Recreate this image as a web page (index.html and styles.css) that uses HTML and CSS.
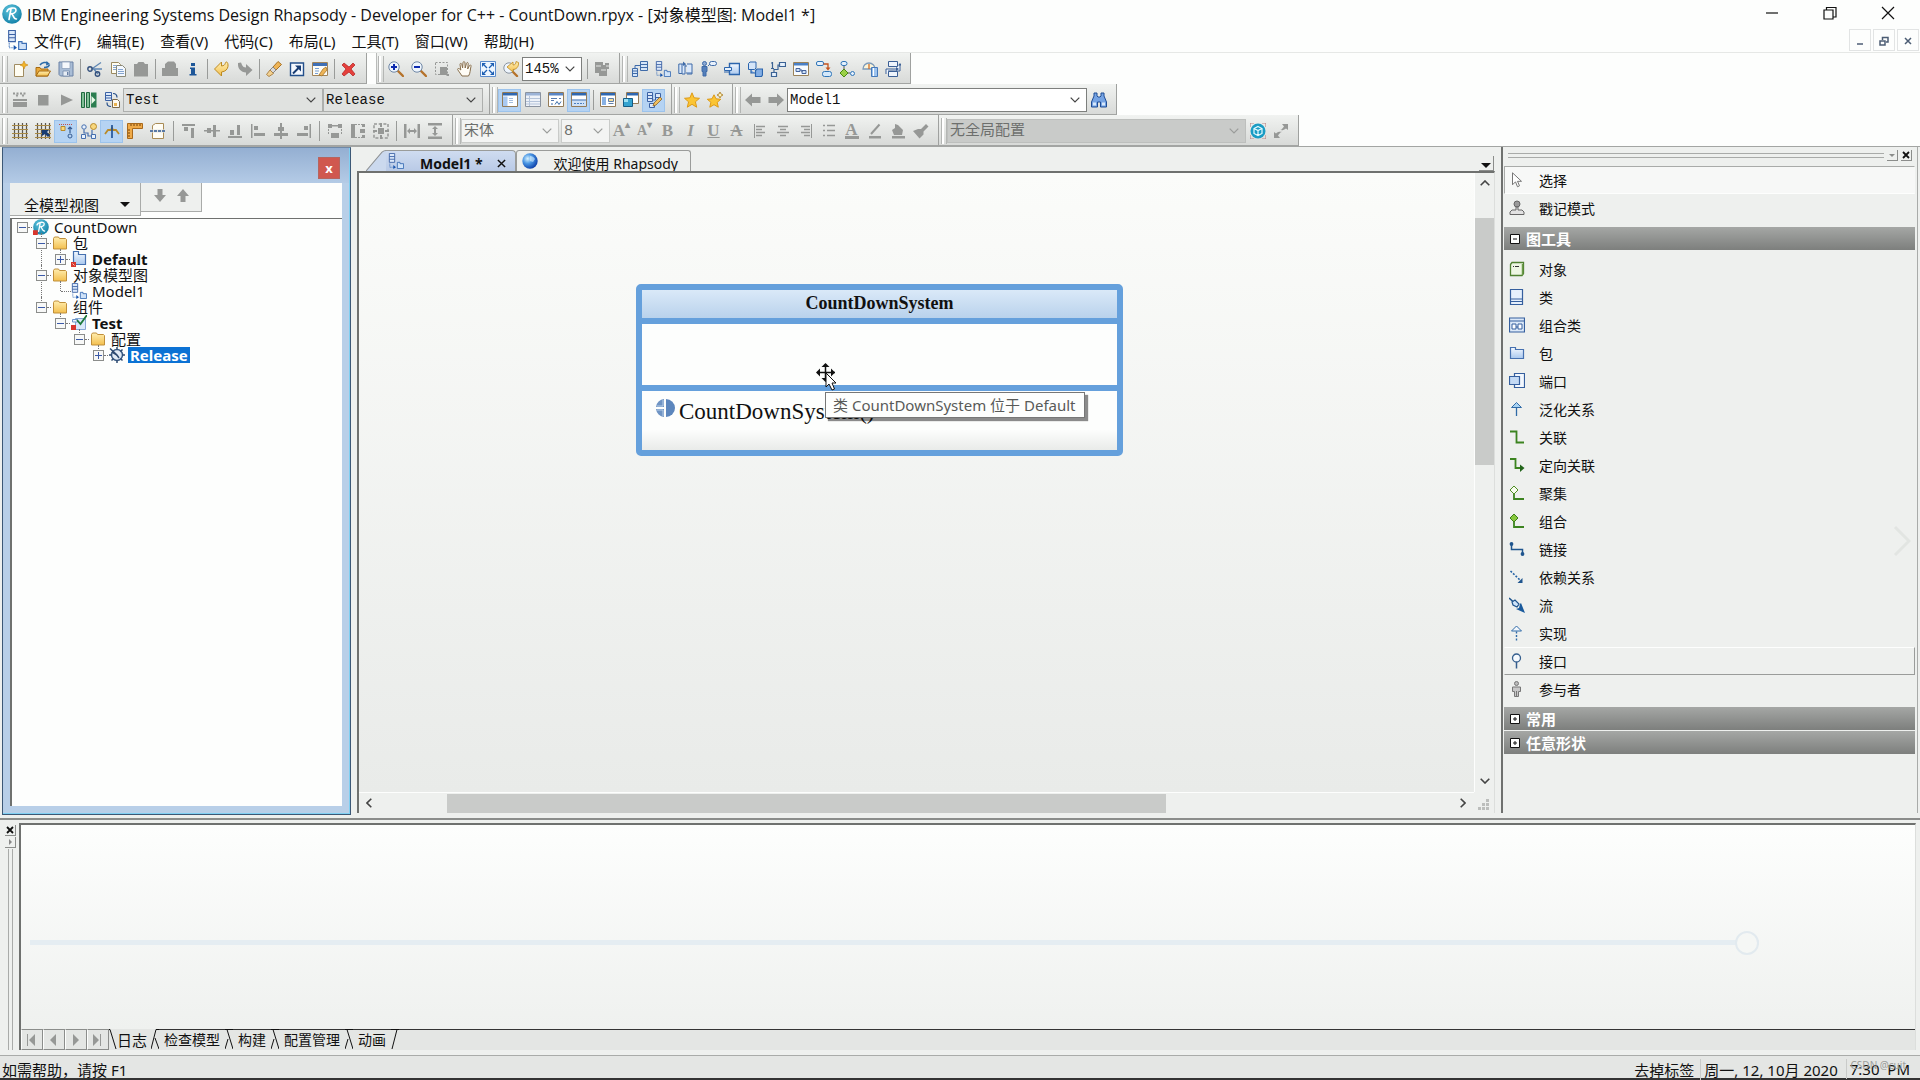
FILE: index.html
```html
<!DOCTYPE html>
<html lang="zh-CN">
<head>
  <meta charset="UTF-8">
  <meta name="viewport" content="width=device-width, initial-scale=1.0">
  <title>IBM Engineering Systems Design Rhapsody</title>
  <link rel="stylesheet" href="styles.css">
</head>
<body>

  <!-- icon sprite -->
  <svg class="sprite" aria-hidden="true">
    <defs>
      <linearGradient id="gBlue" x1="0" y1="0" x2="0" y2="1"><stop offset="0" stop-color="#f4f9ff"/><stop offset="1" stop-color="#a9c8ee"/></linearGradient>
      <linearGradient id="gGold" x1="0" y1="0" x2="0" y2="1"><stop offset="0" stop-color="#ffeeb0"/><stop offset="1" stop-color="#f3bf4e"/></linearGradient>
      <radialGradient id="gLogo" cx=".4" cy=".3" r=".8"><stop offset="0" stop-color="#5ec4dc"/><stop offset="1" stop-color="#0b7ba3"/></radialGradient>
      <radialGradient id="gGlobe" cx=".35" cy=".35" r=".7"><stop offset="0" stop-color="#d8f3ff"/><stop offset=".45" stop-color="#4a97e4"/><stop offset="1" stop-color="#0c3fa8"/></radialGradient>
    </defs>
    <symbol id="logo" viewBox="0 0 20 20"><circle cx="10" cy="10" r="9.8" fill="url(#gLogo)"/><path d="M7 15.5 9 5M5 7.5C6 4 14 2.500 14 6.200 14 9 10.500 10 8.500 9.800M9.800 10c1.400.4 1.600 5.500 4.700 5" fill="none" stroke="#fff" stroke-width="1.600" stroke-linecap="round"/></symbol>
    <symbol id="omd" viewBox="0 0 18 18"><path d="M1.500.5h6v10h-6zM1.500 4h6M1.500 7h6" fill="#dce9fa" stroke="#3c62a5"/><path d="M2 12v4h5" fill="none" stroke="#2b64b5" stroke-dasharray="1 1"/><path d="m6 13.500 3 2.500-3 2z" fill="#1955ad"/><path d="M10.500 17.500v-7h3v1.500h4v5.500z" fill="#cfe2f8" stroke="#3c6fb5"/></symbol>
    <symbol id="new" viewBox="0 0 16 16"><path d="M2.500 3.500h8l1 1v11h-9z" fill="#fffdf2" stroke="#a08c62"/><path d="m12 0 1.200 2.800L16 4l-2.800 1.200L12 8l-1.200-2.800L8 4l2.800-1.200z" fill="#f2b52c" stroke="#c88712" stroke-width=".6"/></symbol>
    <symbol id="open" viewBox="0 0 16 16"><path d="M1 15V6.500h4L6 8h7v7z" fill="#e9a93a" stroke="#a56a12"/><path d="m1 15 3-5h11.500l-3 5z" fill="url(#gGold)" stroke="#a56a12"/><path d="M5 4C7 1 11 1 12.500 2M9 6.500c3 0 5-1 5.500-3" fill="none" stroke="#2b6aa9" stroke-width="1.500"/><path d="M11.500 0 15 3l-4 1.500z" fill="#2b6aa9"/></symbol>
    <symbol id="save" viewBox="0 0 16 16"><path d="M1 1h14v14H2.500L1 13.500z" fill="#a9bdd6" stroke="#6a81a5"/><path d="M4 1h8v6.500H4z" fill="#f5f8fc" stroke="#8599b6" stroke-width=".7"/><path d="M5 10h6.500v5H5z" fill="#e7edf5" stroke="#6a81a5" stroke-width=".7"/><path d="M9 11h1.500v3H9z" fill="#6a81a5"/></symbol>
    <symbol id="cut" viewBox="0 0 16 16"><path d="m4 8.500 10-7M5.500 6.500 11 13M6 8h9" fill="none" stroke="#5f87b4" stroke-width="1.300"/><circle cx="3" cy="8" r="2.200" fill="none" stroke="#35517d" stroke-width="1.400"/><circle cx="10.500" cy="13" r="2.200" fill="none" stroke="#35517d" stroke-width="1.400"/></symbol>
    <symbol id="copy" viewBox="0 0 16 16"><path d="M1.500 1.500h7l2 2v9h-9z" fill="#fffdf2" stroke="#9b8a60"/><path d="M6.500 4.500h6l3 3v8h-9z" fill="#f3f8ff" stroke="#8b8a78"/><path d="M3 4.500h4M3 6.500h3M3 8.500h3M8 8.500h5M8 10.500h6M8 12.500h6" stroke="#86a5cf"/></symbol>
    <symbol id="paste" viewBox="0 0 16 16"><path d="M1 3h3l1.500-2h5L12 3h3v12.500H1z" fill="currentColor"/></symbol>
    <symbol id="print" viewBox="0 0 16 16"><path d="M3 7V3l3-2.500h6L14 3v4h2v8H0V7z" fill="currentColor"/></symbol>
    <symbol id="info" viewBox="0 0 16 16"><path d="M6 2h4v3H6zM5 6.500h5V13h1.500v1.500h-7V13H6V8H5z" fill="#1e5799"/></symbol>
    <symbol id="undo" viewBox="0 0 16 16"><path d="m.5 8 7-7v4c5-.5 3-4 5-4s3.500 9-5 10v4z" fill="url(#gGold)" stroke="#bd8a20" stroke-linejoin="round"/></symbol>
    <symbol id="redo" viewBox="0 0 16 16"><path d="m15.500 9-6.500-6v3.500C5 6.500 5 3 4 1.500L1 2c-.5 6 3 9 8 9.500V15z" fill="currentColor"/></symbol>
    <symbol id="brush" viewBox="0 0 16 16"><path d="m7 6 5-5.500 3.500 3L10 9z" fill="#eeb457" stroke="#a87327"/><path d="m7 6 3 3-3 3-3-3z" fill="#d9d9d9" stroke="#888"/><path d="m4 9 3.500 3.500L3 15.500l-2.500-2z" fill="#f2d191" stroke="#ad8448"/></symbol>
    <symbol id="goto" viewBox="0 0 16 16"><path d="M1.500 2h13v12.500h-13z" fill="#f4f8fe" stroke="#234f8b" stroke-width="1.400"/><path d="m4 12.500 5.500-5.500" stroke="#183c72" stroke-width="2"/><path d="M6 4.500h6v6z" fill="#183c72"/></symbol>
    <symbol id="winbrush" viewBox="0 0 16 16"><path d="M.5 1.500h15v13H.5z" fill="#fdfcf6" stroke="#a1845a"/><path d="M1 2h14v3H1z" fill="#3f6fb5"/><path d="M3 7.500h4M3 10h4M3 12.500h3" stroke="#77a0d6"/><path d="m7 14 4-6 3-2 1 3-5 6z" fill="#eeb457" stroke="#9a6a20" stroke-width=".7"/></symbol>
    <symbol id="delete" viewBox="0 0 16 16"><path d="m3 2 5 4 4-4 2 2-4 4 4 5-2 2-4-4-5 4-2-2 4-5-4-4z" fill="#e5403c" stroke="#b01d1d" stroke-width=".7"/></symbol>
    <symbol id="zoomin" viewBox="0 0 16 16"><path d="m10 10 5 5" stroke="#b5722a" stroke-width="2.400" stroke-linecap="round"/><circle cx="6" cy="6" r="5.200" fill="#eef5fd" stroke="#6f87a5"/><path d="M3 6h6M6 3v6" stroke="#0c2bb0" stroke-width="2"/></symbol>
    <symbol id="zoomout" viewBox="0 0 16 16"><path d="m10 10 5 5" stroke="#b5722a" stroke-width="2.400" stroke-linecap="round"/><circle cx="6" cy="6" r="5.200" fill="#eef5fd" stroke="#6f87a5"/><path d="M3 6h6" stroke="#0c2bb0" stroke-width="2"/></symbol>
    <symbol id="zoomsel" viewBox="0 0 16 16"><path d="M1.500 1.500h12v12h-12z" fill="none" stroke="currentColor" stroke-dasharray="2 1.500"/><path d="M6 6h7v7h2v2h-2l-1-1H6z" fill="currentColor"/></symbol>
    <symbol id="hand" viewBox="0 0 16 16"><path d="M5 15c-1-2-3-4-4.300-6.300C.3 7.200 2 7 3.800 9L3 3.500C3 2 4.500 2 4.800 3.500L5.600 7 6 1.700c.2-1.500 1.700-1.500 1.900 0L8.200 7l1.300-4.700c.5-1.300 1.900-.9 1.700.4L10.700 8l1.800-3.500c.8-1 1.900-.3 1.500.9C13 9 13.500 12 11.500 15z" fill="#fffdf6" stroke="#876e4c"/></symbol>
    <symbol id="fit" viewBox="0 0 16 16"><path d="M.5.5h15v15H.5z" fill="#eef6ff" stroke="#5d8ccb"/><path d="M2 2h4L2 6zM14 2v4l-4-4zM2 14v-4l4 4zM14 14h-4l4-4z" fill="#1d5fb4"/><path d="m4 4 3 3M12 4 9 7M4 12l3-3M12 12 9 9" stroke="#1d5fb4" stroke-width="1.300"/></symbol>
    <symbol id="zoomback" viewBox="0 0 16 16"><path d="m10 11 4 4" stroke="#b5722a" stroke-width="2.400" stroke-linecap="round"/><circle cx="6" cy="7" r="5.200" fill="#eef5fd" stroke="#8a94a0"/><path d="m4 6 6-5v3c2 0 3-1 3-3.500l2.500 1C16 6 13 8.500 10 8.500V11z" fill="url(#gGold)" stroke="#c08a1e" stroke-width=".8"/></symbol>
    <symbol id="layers" viewBox="0 0 16 16"><path d="M1 1h8v3h2V2h4v6h-2v7H5v-3H1z" fill="currentColor"/><path d="M2 5h5M7 9h5M12 5h3" stroke="#e4e6e4"/></symbol>
    <symbol id="d-struct" viewBox="0 0 16 16"><path d="M8.500.5h7v9h-7zM8.500 3.500h7M8.500 6.500h7M.5 7.500h5v8h-5zM.5 10h5M.5 12.500h5M3 7V4.500h5" fill="#d5e5f8" stroke="#3f6ba8"/></symbol>
    <symbol id="d-seq" viewBox="0 0 16 16"><path d="M4 3v10h3V3zM9 3h5v10H9M4 3H.8v9.500H4M7 5h2M8 12h6" fill="#dbe9fb" stroke="#3f6ba8"/><path d="m5 .5 3 2.500-3 2z" fill="#3f6ba8"/></symbol>
    <symbol id="d-use" viewBox="0 0 16 16"><circle cx="3.500" cy="2.500" r="2" fill="#8ba9d3" stroke="#3f6ba8"/><path d="M1 5.500h5v5H5V15H2v-4.500H1zM7 5l2-2" fill="#5580bb" stroke="#3f6ba8"/><rect x="8.500" y=".5" width="7" height="4" rx="2" fill="#e8f1fc" stroke="#3f6ba8"/></symbol>
    <symbol id="d-comp" viewBox="0 0 16 16"><path d="M5.500 2.500h10v11h-10z" fill="url(#gBlue)" stroke="#2c65ad" stroke-width="1.400"/><path d="M.5 6.500h7v3h-7z" fill="#e6f1fc" stroke="#2c65ad"/><path d="M0 11h5" stroke="#2c65ad"/></symbol>
    <symbol id="d-deploy" viewBox="0 0 16 16"><path d="M1.500 2.500 3 1h6v6L7.500 8.500h-6z" fill="#d5e5f8" stroke="#2c65ad"/><path d="m8.500 9.500 1.500-1.500h5.500v6l-1 1.500h-6zM4 9v3h4" fill="#83aee4" stroke="#2c65ad" stroke-width="1.200"/></symbol>
    <symbol id="d-collab" viewBox="0 0 16 16"><path d="M2.500 1v6M1 2h1.500M1 7.500h3M9.500 1.500h6v4h-6zM1.500 11.500h5v4h-5zM4 11V8.500h4V4h1" fill="#e6f1fc" stroke="#3b6294" stroke-width="1.200"/></symbol>
    <symbol id="d-panel" viewBox="0 0 16 16"><path d="M.5 1.500h15v13H.5z" fill="#f7fbff" stroke="#9b8259"/><path d="M1 2h14v2.500H1z" fill="#4a80c6"/><path d="M3 7.500h4v3H3zM9 9.500h4v3H9zM7 9h2v2" fill="#cfe2f8" stroke="#47639a"/></symbol>
    <symbol id="d-state" viewBox="0 0 16 16"><rect x=".5" y=".5" width="7" height="4" rx="1.500" fill="#e5f1fd" stroke="#2f75b8"/><rect x="6.500" y="10.500" width="9" height="5" rx="2" fill="#d3e8fb" stroke="#2f75b8"/><path d="M7.500 3H12v4" fill="none" stroke="#c4521e" stroke-width="1.300"/><path d="M9.500 6.500h5L12 9.500z" fill="#c4521e"/></symbol>
    <symbol id="d-act" viewBox="0 0 16 16"><rect x="2" y=".5" width="6" height="4" rx="2" fill="#e5f1fd" stroke="#2f75b8"/><path d="M5 5v3M8 12h3" stroke="#555"/><path d="m5 8 4 4-4 4-4-4z" fill="#9bd048" stroke="#4b8a12"/><circle cx="13.500" cy="12.500" r="2" fill="#e5f1fd" stroke="#2f75b8"/></symbol>
    <symbol id="d-time" viewBox="0 0 16 16"><path d="M1 8a6 6 0 0 1 12 0z" fill="#fdf5d8" stroke="#7e9bb9" stroke-width="1.300"/><path d="M7 8V3" stroke="#d26b22" stroke-width="1.300"/><path d="M9.500 6.500h6v9h-6z" fill="#9dc3ee" stroke="#4579ba"/><path d="M11.500 7v8" stroke="#fff"/></symbol>
    <symbol id="d-flow" viewBox="0 0 16 16"><path d="M3.500.5h9v5h-9zM3.500 10.500h9v5h-9zM1 13V8h10M3 10h12V4" fill="#eef4fc" stroke="#3b5f95"/><path d="M13 4.500h4L15 2zM11 6v4l3-2z" fill="#3b5f95"/></symbol>
    <symbol id="make" viewBox="0 0 16 16"><path d="M1 7h14v2H1zM1 10h14v5H1z" fill="currentColor"/><path d="M1 1.500h14" stroke="currentColor" stroke-width="2" stroke-dasharray="2 1.500"/><path d="M3.500 2.500h3L5 5.500zM9.500 2.500h3L11 5.500z" fill="currentColor"/></symbol>
    <symbol id="stop" viewBox="0 0 16 16"><path d="M3 3h10.500v10.500H3z" fill="currentColor"/></symbol>
    <symbol id="play" viewBox="0 0 16 16"><path d="M3 2.500 15 8 3 13.500z" fill="currentColor"/></symbol>
    <symbol id="gmr" viewBox="0 0 16 16"><path d="M.5.5h3v15h-3zM5.500.5h3v15h-3z" fill="#7fbf95" stroke="#216a41"/><path d="M10 .5h5.500v15H10z" fill="#2b7d50"/><path d="m10.500 4 4 4-4 4z" fill="#eafbe9"/></symbol>
    <symbol id="dbdoc" viewBox="0 0 16 16"><path d="M1.500.5h6v8h-6zM1.500 3.500h6M1.500 6h6" fill="#dce9fa" stroke="#3c62a5"/><path d="M8.500 7.500h5l2 2v6h-7z" fill="#fffaf0" stroke="#7d6a4b"/><path d="M10 11h3v3h-3z" fill="#e9b24f"/><path d="M9 1.500c3 0 4 1 4 4M7 14.500c-3 0-4-1-4-4" fill="none" stroke="#234c88" stroke-width="1.200"/></symbol>
    <symbol id="w-side" viewBox="0 0 16 16"><path d="M.5.5h15v14H.5z" fill="#fff" stroke="#937b58"/><path d="M1 1h14v2.500H1z" fill="#2e67b0"/><path d="M1 4.500h4.500V14H1z" fill="#a9c9f1"/><path d="M7 6.500h4M7 8.500h4M7 10.500h4" stroke="#a3bddd"/></symbol>
    <symbol id="w-list" viewBox="0 0 16 16"><path d="M.5.5h15v14H.5z" fill="#eef2f8" stroke="#8a93a0"/><path d="M1 1h14v2.500H1z" fill="#9bb3d7"/><path d="M1 6.500h14M1 9.500h14M1 12h14M4.500 4v10" stroke="#b5c4da"/></symbol>
    <symbol id="w-prop" viewBox="0 0 16 16"><path d="M.5.5h15v14H.5z" fill="#fff" stroke="#937b58"/><path d="M1 1h14v2.500H1z" fill="#5a86c5"/><path d="M3 6.500h6M3 8.500h3M11 6.500h2" stroke="#577bb0"/><path d="m7 12.500 2-3 2 3 2-3M3 12h2" fill="none" stroke="#3a6dab"/></symbol>
    <symbol id="w-out" viewBox="0 0 16 16"><path d="M.5.5h15v14H.5z" fill="#fff" stroke="#937b58"/><path d="M1 1h14v2.500H1z" fill="#2e67b0"/><path d="M1 8.500h14V14H1z" fill="#cfe1f6"/><path d="M1 8h14" stroke="#2e67b0"/><path d="M3 11.500h10" stroke="#4b7fc0" stroke-dasharray="2 1"/></symbol>
    <symbol id="w-table" viewBox="0 0 16 16"><path d="M.5.5h15v14H.5z" fill="#fff" stroke="#937b58"/><path d="M1 1h14v2.500H1z" fill="#2e67b0"/><path d="M2 5h4v8H2z" fill="#88b1e4"/><path d="M8.500 6.500h5v3h-5zM8.500 11.500h5" fill="#f5df9a" stroke="#5f7eab"/></symbol>
    <symbol id="w-sub" viewBox="0 0 16 16"><path d="M3.500.5h12v11h-12z" fill="#fff" stroke="#937b58"/><path d="M4 1h11v2.500H4z" fill="#2e67b0"/><path d="M.5 6.500h9v8h-9z" fill="#34a3d0" stroke="#155c85"/><path d="M1 7h4v3H1z" fill="#9be0f3"/></symbol>
    <symbol id="w-edit" viewBox="0 0 16 16"><path d="M1.500.5h5v9h-5zM1.500 3.500h5M1.500 6.500h5M9.500 1.500h5v4h-5zM3.500 11.500h5v4h-5zM6.500 8h3V5" fill="#dbe8fa" stroke="#3c62a5"/><path d="m7 14 1-3 6-6 2 2-6 6z" fill="#f0bf60" stroke="#8d6526" stroke-width=".8"/></symbol>
    <symbol id="star" viewBox="0 0 16 16"><path d="m8 .8 2.100 5 5.400.5-4.100 3.500 1.300 5.400L8 12.300l-4.700 2.900 1.300-5.400L.5 6.300l5.400-.5z" fill="#fbc534" stroke="#dd9a17"/></symbol>
    <symbol id="staradd" viewBox="0 0 16 16"><path d="m7 2.800 2 4 4.800.5-3.600 3 1.100 4.900L7 12.700l-4.200 2.500 1.100-4.900-3.600-3L5 6.800z" fill="#fbc534" stroke="#dd9a17"/><path d="m13 0 1 2 2 1-2 1-1 2-1-2-2-1 2-1z" fill="#fff4b8" stroke="#a87821" stroke-width=".8"/></symbol>
    <symbol id="back" viewBox="0 0 16 16"><path d="m0 8 7-6.500V5h8.500v6H7v3.500z" fill="currentColor"/></symbol>
    <symbol id="fwd" viewBox="0 0 16 16"><path d="M16 8 9 1.500V5H.5v6H9v3.500z" fill="currentColor"/></symbol>
    <symbol id="binoc" viewBox="0 0 16 16"><path d="M3 1h3v3l1 1h2l1-1V1h3v3l2.500 6v5h-6v-5h-3v5h-6v-5L3 4z" fill="#75a3e3" stroke="#1f4c94"/><path d="M2 10.500h3v3H2zM11 10.500h3v3h-3z" fill="#d7e8fb"/></symbol>
    <symbol id="grid" viewBox="0 0 16 16"><path d="M2.500 0v16M6.500 0v16M10.500 0v16M14.500 0v16" stroke="#5d574c" stroke-width="1.200"/><path d="M0 2.500h16M0 6.500h16M0 10.500h16M0 14.500h16" stroke="#a98a45" stroke-width="1.200"/></symbol>
    <symbol id="gridsnap" viewBox="0 0 16 16"><path d="M2.500 0v16M6.500 0v16M10.500 0v16M14.500 0v16" stroke="#5d574c" stroke-width="1.200"/><path d="M0 2.500h16M0 6.500h16M0 10.500h16M0 14.500h16" stroke="#a98a45" stroke-width="1.200"/><path d="M7 7h7l-2 2 3 3-2 2-3-3-3 2z" fill="#173c73"/></symbol>
    <symbol id="f-name" viewBox="0 0 16 16"><path d="M1 1.500h14" stroke="#c0504d" stroke-dasharray="1 1"/><path d="M3 3.500h4v4H3z" fill="#f8d77c" stroke="#b98a2a"/><path d="M12 4v6m-2-4 2-2 2 2" fill="none" stroke="#345b92" stroke-width="1.200"/><circle cx="12" cy="13" r="2" fill="none" stroke="#345b92"/></symbol>
    <symbol id="f-link" viewBox="0 0 16 16"><circle cx="3" cy="4" r="2.200" fill="#e9f2fd" stroke="#466fae"/><circle cx="12.500" cy="3.500" r="3" fill="#f8d77c" stroke="#b98a2a"/><path d="M3 6.500V10h4v3h4V7" fill="none" stroke="#466fae" stroke-width="1.200"/><path d="M.5 11.500h4v4h-4zM10.500 11.500h4v4h-4z" fill="#e9f2fd" stroke="#466fae"/></symbol>
    <symbol id="f-tree" viewBox="0 0 16 16"><path d="M1 11 4 7h3l1-2 1 2h3l3 4" fill="none" stroke="#b98a2a" stroke-width="1.800"/><path d="M8 2v13" stroke="#174c94" stroke-width="1.600"/></symbol>
    <symbol id="ruler" viewBox="0 0 16 16"><path d="M.5.5h15v5h-10v10h-5z" fill="#efaa48" stroke="#a9691b"/><path d="M4 1v2M7 1v2M10 1v2M13 1v2M1 7h2M1 10h2M1 13h2" stroke="#744309"/></symbol>
    <symbol id="pagebrk" viewBox="0 0 16 16"><path d="M2.500 6.500v-4l3-2h8v6M2.500 9.500v6h11v-6" fill="#fffdf5" stroke="#a98b55"/><path d="M0 8h16" stroke="#2e5790" stroke-width="1.500" stroke-dasharray="3 1"/></symbol>
    <symbol id="a-top" viewBox="0 0 16 16"><path d="M1 1h13v2H1zM3 4h4v4H3zM10 5h3v10h-3z" fill="currentColor"/></symbol>
    <symbol id="a-mid" viewBox="0 0 16 16"><path d="M0 7h16v1.500H0zM3 5h4v5H3zM9 2h3v12H9z" fill="currentColor"/></symbol>
    <symbol id="a-bot" viewBox="0 0 16 16"><path d="M1 13h14v2H1zM3 7h4v5H3zM10 2h3v10h-3z" fill="currentColor"/></symbol>
    <symbol id="a-left" viewBox="0 0 16 16"><path d="M1 1h1.500v14H1zM4 3h4v4H4zM4 10h11v3H4z" fill="currentColor"/></symbol>
    <symbol id="a-cen" viewBox="0 0 16 16"><path d="M7 0h2v16H7zM5 4h6v4H5zM1 10h14v3H1z" fill="currentColor"/></symbol>
    <symbol id="a-right" viewBox="0 0 16 16"><path d="M13.500 1H15v14h-1.500zM8 3h4v4H8zM1 10h11v3H1z" fill="currentColor"/></symbol>
    <symbol id="s-w" viewBox="0 0 16 16"><path d="M1 1h4v4H1zM11 1h4v4h-4zM5 2h6v1.500H5zM4 10h8v5H4z" fill="currentColor"/><path d="M1.500 6v6M14.500 6v6" fill="none" stroke="currentColor" stroke-dasharray="2 1"/></symbol>
    <symbol id="s-h" viewBox="0 0 16 16"><path d="M1 1h4v14H1zM12 1h3v3h-3zM12 12h3v3h-3zM10 6h5v4h-5z" fill="currentColor"/><path d="M5 1.500h7M5 14.500h7" stroke="currentColor" stroke-dasharray="2 1"/></symbol>
    <symbol id="s-both" viewBox="0 0 16 16"><path d="M5 5h6v6H5zM0 7h4v2H0zM12 7h4v2h-4zM7 0h2v4H7zM7 12h2v4H7z" fill="currentColor"/><path d="M1 1h14v14H1z" fill="none" stroke="currentColor" stroke-width="1.500" stroke-dasharray="3 1.700"/></symbol>
    <symbol id="sp-h" viewBox="0 0 16 16"><path d="M0 1h2.500v14H0zM13.500 1H16v14h-2.500zM3 8l3-3v2h4V5l3 3-3 3V9H6v2z" fill="currentColor"/></symbol>
    <symbol id="sp-v" viewBox="0 0 16 16"><path d="M1 0h14v2.500H1zM1 13.500h14V16H1zM8 3l3 3H9v4h2l-3 3-3-3h2V6H5z" fill="currentColor"/></symbol>
    <symbol id="t-left" viewBox="0 0 16 16"><path d="M2.500 1v14" stroke="currentColor"/><path d="M4 3.500h9M4 6.500h6M4 9.500h9M4 12.500h6" stroke="currentColor" stroke-width="1.500"/></symbol>
    <symbol id="t-center" viewBox="0 0 16 16"><path d="M3 3.500h10M5 6.500h6M2 9.500h12M5 12.500h6" stroke="currentColor" stroke-width="1.500"/></symbol>
    <symbol id="t-right" viewBox="0 0 16 16"><path d="M13.500 1v14" stroke="currentColor"/><path d="M3 3.500h9M6 6.500h6M3 9.500h9M6 12.500h6" stroke="currentColor" stroke-width="1.500"/></symbol>
    <symbol id="t-list" viewBox="0 0 16 16"><path d="M2 2.500h2M2 7.500h2M2 12.500h2M6 2.500h8M6 7.500h8M6 12.500h8" stroke="currentColor" stroke-width="1.500"/></symbol>
    <symbol id="t-pen" viewBox="0 0 16 16"><path d="M2 13h12v2.500H2z" fill="currentColor"/><path d="m4 11 8.500-9.500" stroke="currentColor" stroke-width="2"/></symbol>
    <symbol id="t-fill" viewBox="0 0 16 16"><path d="M2 13h13v2.500H2zM5 1l3 1 5 5-1 5H4L2 7l3-2z" fill="currentColor"/></symbol>
    <symbol id="t-brush" viewBox="0 0 16 16"><path d="m0 8 5-2 3 0 5-5 2.500 2.500-5 5 0 3-4 4z" fill="currentColor"/></symbol>
    <symbol id="gconf" viewBox="0 0 16 16"><circle cx="8" cy="8" r="7.500" fill="#1a9cc4"/><path d="M0 0h4M0 0v4M16 0h-4M16 0v4M0 16h4M0 16v-4M16 16h-4M16 16v-4" stroke="#b88" stroke-width="1.200"/><path d="m8 3.500 4 2v5l-4 2-4-2v-5zM4 5.500l4 2 4-2M8 7.500v5" fill="none" stroke="#e6fbff" stroke-width="1.200"/></symbol>
    <symbol id="refresh" viewBox="0 0 16 16"><path d="M15 1v6l-2-1.500C10 8 8 7 7 7c2 0 2.500-2 4-3.500L9 1zM1 15V9l2 1.500C6 8 8 9 9 9c-2 0-2.500 2-4 3.500L7 15z" fill="currentColor"/></symbol>
    <symbol id="folder" viewBox="0 0 16 14"><path d="M1.500 13V2.500l1-1.500h4l1 1.500h6l1 1V13z" fill="url(#gGold)" stroke="#c08f3a"/></symbol>
    <symbol id="pkg" viewBox="0 0 16 16"><path d="M1.500 13.500v-11h5v2h8v9z" fill="url(#gBlue)" stroke="#4671b0" stroke-width="1.200"/></symbol>
    <symbol id="pkgred" viewBox="0 0 16 16"><path d="M2.500 13.500v-13h5v3h7v10z" fill="url(#gBlue)" stroke="#4671b0" stroke-width="1.200"/><path d="M0 11h5v5H0z" fill="#d8372e"/><path d="m1.500 12.500 2 2" stroke="#fff" stroke-width=".7"/></symbol>
    <symbol id="logored" viewBox="0 0 20 20"><use href="#logo" width="20" height="20"/><path d="M0 14h6v6H0z" fill="#d8372e"/></symbol>
    <symbol id="comp" viewBox="0 0 16 16"><path d="M4.500 3.500h10v11h-10z" fill="#d9e8fa" stroke="#86a7d4"/><path d="M1.500 4.500h5v2.500h-5z" fill="#eef5fd" stroke="#6d93c7"/><path d="m6 5 3.500 4L16 0" fill="none" stroke="#1d7a3a" stroke-width="1.800"/><path d="M0 10h5v5H0z" fill="#d8372e"/></symbol>
    <symbol id="gear" viewBox="0 0 16 16"><circle cx="8" cy="8" r="5.500" fill="#e2ebf5" stroke="#3f5f87" stroke-width="1.500"/><path d="M8 0v3M8 13v3M0 8h3M13 8h3M1 1.500 8 8l2 3M2.500 13.500l2-2M11.500 11.500l2 2M11.500 4.500l2-2M3 5l5 3" stroke="#2f4c72" stroke-width="1.500"/></symbol>
    <symbol id="globe" viewBox="0 0 16 16"><circle cx="8" cy="8" r="7.700" fill="url(#gGlobe)"/><path d="M8 3c2 0 4 1 5 3l-2 3-3-1z" fill="#d9f0ff" opacity=".6"/></symbol>
    <symbol id="ctor" viewBox="0 0 20 20"><path d="M9 1v8H1a9 9 0 0 1 8-8zM9 19v-8H1a9 9 0 0 0 8 8z" fill="#6f94c4"/><path d="M11 1a9 9 0 0 1 0 18z" fill="#5c86bd"/><path d="M8 2v6H2M8 18v-6H2" stroke="#b9cfe8" fill="none"/></symbol>
    <symbol id="p-sel" viewBox="0 0 16 16"><path d="M3.500.8v12l3-3 2 5 2-1-2-4.500h4z" fill="#fff" stroke="#777"/></symbol>
    <symbol id="p-stamp" viewBox="0 0 16 16"><circle cx="8" cy="4" r="3" fill="#9a9a9a" stroke="#666"/><path d="M7 7h2v3h4l2 2v2.500H1V12l2-2h4z" fill="#e2e2e2" stroke="#666"/></symbol>
    <symbol id="p-obj" viewBox="0 0 16 16"><path d="m1.500 3.500 1.500-2h11.500v11l-1.500 2H1.500z" fill="#eef7e3" stroke="#4f8130" stroke-width="1.300"/><path d="M13.500 3v11" stroke="#6b9a49" stroke-width="1.500"/><path d="M4 5.500h1M6 5.500h4" stroke="#333"/></symbol>
    <symbol id="p-class" viewBox="0 0 16 16"><path d="M1.500.5h12v15h-12zM1.500 10h12M1.500 12.500h12" fill="#e6f0fc" stroke="#355f9e" stroke-width="1.200"/></symbol>
    <symbol id="p-cclass" viewBox="0 0 16 16"><path d="M.5 1h15v14H.5zM.5 4h15" fill="#dbe8f8" stroke="#355f9e" stroke-width="1.200"/><path d="M3 7h4v5H3zM9 7h4v5H9zM7 10h2" fill="#fff" stroke="#355f9e"/></symbol>
    <symbol id="p-port" viewBox="0 0 16 16"><path d="M5.500.5h10v14h-10z" fill="#f3f8fe" stroke="#355f9e" stroke-width="1.200"/><path d="M.5 3.500h10v8H.5z" fill="#c4daf4" stroke="#355f9e" stroke-width="1.200"/></symbol>
    <symbol id="p-gen" viewBox="0 0 16 16"><path d="M7.500 15V6" stroke="#2f6aa7" stroke-width="1.300"/><path d="m7.500 1.500 5 5h-10z" fill="#a9d3f2" stroke="#2f6aa7"/></symbol>
    <symbol id="p-assoc" viewBox="0 0 16 16"><path d="M1 2.500h6.500v11H15" fill="none" stroke="#3c8420" stroke-width="1.800"/></symbol>
    <symbol id="p-dassoc" viewBox="0 0 16 16"><path d="M1 2h5.500v9H12" fill="none" stroke="#3c8420" stroke-width="1.800"/><path d="m11 7.500 4.500 3.500-4.500 4z" fill="#22651a"/></symbol>
    <symbol id="p-agg" viewBox="0 0 16 16"><path d="M5 8v6h10" fill="none" stroke="#3c8420" stroke-width="1.800"/><path d="m5 1 4 4-4 4-4-4z" fill="#f7fcef" stroke="#4f8f22"/></symbol>
    <symbol id="p-compo" viewBox="0 0 16 16"><path d="M5 8v6h10" fill="none" stroke="#3c8420" stroke-width="1.800"/><path d="m5 1 4 4-4 4-4-4z" fill="#87c73d" stroke="#3c7f18"/></symbol>
    <symbol id="p-link" viewBox="0 0 16 16"><path d="M2.500 3v5.500h11V13" fill="none" stroke="#1f558e" stroke-width="1.500"/><circle cx="2.500" cy="3" r="1.900" fill="#1f558e"/><circle cx="13.500" cy="13" r="1.900" fill="#1f558e"/></symbol>
    <symbol id="p-dep" viewBox="0 0 16 16"><path d="m1.500 2 10 9.500" stroke="#2563a5" stroke-width="1.600" stroke-dasharray="2 1.500"/><path d="M13.500 9v5h-5z" fill="#1f558e"/></symbol>
    <symbol id="p-flow" viewBox="0 0 16 16"><path d="m0 1 9 8" stroke="#1f558e" stroke-width="1.600"/><path d="m3 5 3-2 4 4-2 3-4-2z" fill="#cfe4f9" stroke="#1f558e" stroke-width="1.200"/><path d="m16 16-9-4 3-1 1-4 1-1z" fill="#1a5a9c"/></symbol>
    <symbol id="p-real" viewBox="0 0 16 16"><path d="M7.500 15.500V6" stroke="#2f6aa7" stroke-width="1.400" stroke-dasharray="2 1.500"/><path d="m7.500 1 5 5h-10z" fill="#f3f8fd" stroke="#2f6aa7"/></symbol>
    <symbol id="p-iface" viewBox="0 0 16 16"><circle cx="7.500" cy="5" r="4" fill="#f6fafe" stroke="#355f8e" stroke-width="1.300"/><path d="M7.500 9v6.500" stroke="#355f8e" stroke-width="1.500"/></symbol>
    <symbol id="p-actor" viewBox="0 0 16 16"><circle cx="7.500" cy="2.500" r="2" fill="#bbb" stroke="#777"/><path d="M3.500 6h8v4.500h-2v5h-4v-5h-2z" fill="#c8c8c8" stroke="#777"/><path d="M7.500 10v5" stroke="#777"/></symbol>
    <symbol id="chev" viewBox="0 0 10 6"><path d="m.7.7 4.300 4.300L9.300.7" fill="none" stroke="currentColor" stroke-width="1.200"/></symbol>
  </svg>

  <header class="titlebar">
    <svg class="app-logo"><use href="#logo"/></svg>
    <h1>IBM Engineering Systems Design Rhapsody - Developer for C++ - CountDown.rpyx - [对象模型图: Model1 *]</h1>
    <div class="win-buttons">
      <button aria-label="最小化"><svg viewBox="0 0 14 14"><path d="M1 7h12"/></svg></button>
      <button aria-label="还原"><svg viewBox="0 0 14 14"><path d="M1 4h9v9H1zM3.500 4V1.500H13V11h-3"/></svg></button>
      <button aria-label="关闭"><svg viewBox="0 0 14 14"><path d="m1 1 12 12M13 1 1 13"/></svg></button>
    </div>
  </header>

  <nav class="menubar">
    <svg class="doc-icon"><use href="#omd"/></svg>
    <button>文件(F)</button>
    <button>编辑(E)</button>
    <button>查看(V)</button>
    <button>代码(C)</button>
    <button>布局(L)</button>
    <button>工具(T)</button>
    <button>窗口(W)</button>
    <button>帮助(H)</button>
    <div class="mdi-buttons">
      <button aria-label="最小化文档"><svg viewBox="0 0 10 10"><path d="M2 8h6"/></svg></button>
      <button aria-label="还原文档"><svg viewBox="0 0 10 10"><path d="M1 5h5v4H1zM3.500 4V1.500H9V6H7"/></svg></button>
      <button aria-label="关闭文档"><svg viewBox="0 0 10 10"><path d="m2 2 6 6M8 2 2 8"/></svg></button>
    </div>
  </nav>

  <div class="toolbars">
    <div class="toolbar-row">
      <div class="toolbar">
        <span class="grip"></span>
        <button class="tool" aria-label="新建"><svg><use href="#new"/></svg></button>
        <button class="tool" aria-label="打开"><svg><use href="#open"/></svg></button>
        <button class="tool" aria-label="保存"><svg><use href="#save"/></svg></button>
        <span class="sep"></span>
        <button class="tool" aria-label="剪切"><svg><use href="#cut"/></svg></button>
        <button class="tool" aria-label="复制"><svg><use href="#copy"/></svg></button>
        <button class="tool" aria-label="粘贴"><svg><use href="#paste"/></svg></button>
        <span class="sep"></span>
        <button class="tool" aria-label="打印"><svg><use href="#print"/></svg></button>
        <button class="tool" aria-label="关于"><svg><use href="#info"/></svg></button>
        <span class="sep"></span>
        <button class="tool" aria-label="撤销"><svg><use href="#undo"/></svg></button>
        <button class="tool" aria-label="重做"><svg><use href="#redo"/></svg></button>
        <span class="sep"></span>
        <button class="tool" aria-label="格式刷"><svg><use href="#brush"/></svg></button>
        <button class="tool" aria-label="转到"><svg><use href="#goto"/></svg></button>
        <button class="tool" aria-label="特性"><svg><use href="#winbrush"/></svg></button>
        <span class="sep"></span>
        <button class="tool" aria-label="删除"><svg><use href="#delete"/></svg></button>
      </div>
      <div class="toolbar spaced">
        <span class="grip"></span>
        <button class="tool" aria-label="放大"><svg><use href="#zoomin"/></svg></button>
        <button class="tool" aria-label="缩小"><svg><use href="#zoomout"/></svg></button>
        <button class="tool" aria-label="缩放到选择"><svg><use href="#zoomsel"/></svg></button>
        <button class="tool" aria-label="平移"><svg><use href="#hand"/></svg></button>
        <button class="tool" aria-label="适合窗口"><svg><use href="#fit"/></svg></button>
        <button class="tool" aria-label="撤销缩放"><svg><use href="#zoomback"/></svg></button>
        <label class="combo combo-zoom"><select aria-label="缩放比例"><option>145%</option></select><svg><use href="#chev"/></svg></label>
        <span class="sep"></span>
        <button class="tool" aria-label="图层"><svg><use href="#layers"/></svg></button>
      </div>
      <div class="toolbar">
        <span class="grip"></span>
        <button class="tool" aria-label="结构图"><svg><use href="#d-struct"/></svg></button>
        <button class="tool" aria-label="对象模型图"><svg><use href="#omd"/></svg></button>
        <button class="tool" aria-label="序列图"><svg><use href="#d-seq"/></svg></button>
        <button class="tool" aria-label="用例图"><svg><use href="#d-use"/></svg></button>
        <button class="tool" aria-label="组件图"><svg><use href="#d-comp"/></svg></button>
        <button class="tool" aria-label="部署图"><svg><use href="#d-deploy"/></svg></button>
        <button class="tool" aria-label="协作图"><svg><use href="#d-collab"/></svg></button>
        <button class="tool" aria-label="面板图"><svg><use href="#d-panel"/></svg></button>
        <button class="tool" aria-label="状态图"><svg><use href="#d-state"/></svg></button>
        <button class="tool" aria-label="活动图"><svg><use href="#d-act"/></svg></button>
        <button class="tool" aria-label="时序图"><svg><use href="#d-time"/></svg></button>
        <button class="tool" aria-label="流程图"><svg><use href="#d-flow"/></svg></button>
      </div>
    </div>

    <div class="toolbar-row">
      <div class="toolbar">
        <span class="grip"></span>
        <button class="tool" aria-label="构建"><svg><use href="#make"/></svg></button>
        <button class="tool" aria-label="停止"><svg><use href="#stop"/></svg></button>
        <button class="tool" aria-label="运行"><svg><use href="#play"/></svg></button>
        <button class="tool" aria-label="生成/构建/运行"><svg><use href="#gmr"/></svg></button>
        <button class="tool" aria-label="往返"><svg><use href="#dbdoc"/></svg></button>
        <label class="combo combo-comp flat"><select aria-label="组件"><option>Test</option></select><svg><use href="#chev"/></svg></label>
        <label class="combo combo-conf flat"><select aria-label="配置"><option>Release</option></select><svg><use href="#chev"/></svg></label>
      </div>
      <div class="toolbar">
        <span class="grip"></span>
        <button class="tool on" aria-label="浏览器"><svg><use href="#w-side"/></svg></button>
        <button class="tool" aria-label="列表"><svg><use href="#w-list"/></svg></button>
        <button class="tool" aria-label="属性窗口"><svg><use href="#w-prop"/></svg></button>
        <button class="tool on" aria-label="输出窗口"><svg><use href="#w-out"/></svg></button>
        <span class="sep"></span>
        <button class="tool" aria-label="表"><svg><use href="#w-table"/></svg></button>
        <button class="tool" aria-label="子窗口"><svg><use href="#w-sub"/></svg></button>
        <button class="tool on" aria-label="绘图工具"><svg><use href="#w-edit"/></svg></button>
      </div>
      <div class="toolbar">
        <span class="grip"></span>
        <button class="tool" aria-label="收藏夹"><svg><use href="#star"/></svg></button>
        <button class="tool" aria-label="添加收藏"><svg><use href="#staradd"/></svg></button>
      </div>
      <div class="toolbar">
        <span class="grip"></span>
        <button class="tool" aria-label="后退"><svg><use href="#back"/></svg></button>
        <button class="tool" aria-label="前进"><svg><use href="#fwd"/></svg></button>
        <label class="combo combo-nav"><select aria-label="图"><option>Model1</option></select><svg><use href="#chev"/></svg></label>
        <button class="tool" aria-label="搜索"><svg><use href="#binoc"/></svg></button>
      </div>
    </div>

    <div class="toolbar-row">
      <div class="toolbar layout-bar">
        <span class="grip"></span>
        <button class="tool" aria-label="网格"><svg><use href="#grid"/></svg></button>
        <button class="tool" aria-label="对齐网格"><svg><use href="#gridsnap"/></svg></button>
        <button class="tool on" aria-label="名称"><svg><use href="#f-name"/></svg></button>
        <button class="tool" aria-label="连线"><svg><use href="#f-link"/></svg></button>
        <button class="tool on" aria-label="树形"><svg><use href="#f-tree"/></svg></button>
        <button class="tool" aria-label="标尺"><svg><use href="#ruler"/></svg></button>
        <button class="tool" aria-label="分页符"><svg><use href="#pagebrk"/></svg></button>
        <span class="sep"></span>
        <button class="tool" aria-label="顶端对齐"><svg><use href="#a-top"/></svg></button>
        <button class="tool" aria-label="垂直居中"><svg><use href="#a-mid"/></svg></button>
        <button class="tool" aria-label="底端对齐"><svg><use href="#a-bot"/></svg></button>
        <button class="tool" aria-label="左对齐"><svg><use href="#a-left"/></svg></button>
        <button class="tool" aria-label="水平居中"><svg><use href="#a-cen"/></svg></button>
        <button class="tool" aria-label="右对齐"><svg><use href="#a-right"/></svg></button>
        <span class="sep"></span>
        <button class="tool" aria-label="同宽"><svg><use href="#s-w"/></svg></button>
        <button class="tool" aria-label="同高"><svg><use href="#s-h"/></svg></button>
        <button class="tool" aria-label="同大小"><svg><use href="#s-both"/></svg></button>
        <span class="sep"></span>
        <button class="tool" aria-label="水平间距"><svg><use href="#sp-h"/></svg></button>
        <button class="tool" aria-label="垂直间距"><svg><use href="#sp-v"/></svg></button>
      </div>
      <div class="toolbar">
        <span class="grip"></span>
        <label class="combo combo-font dim"><select aria-label="字体"><option>宋体</option></select><svg><use href="#chev"/></svg></label>
        <label class="combo combo-size dim"><select aria-label="字号"><option>8</option></select><svg><use href="#chev"/></svg></label>
        <button class="tool glyph" aria-label="增大字号">A<sup>▴</sup></button>
        <button class="tool glyph small" aria-label="减小字号">A<sup>▾</sup></button>
        <button class="tool glyph" aria-label="粗体">B</button>
        <button class="tool glyph" aria-label="斜体"><i>I</i></button>
        <button class="tool glyph" aria-label="下划线"><u>U</u></button>
        <button class="tool glyph" aria-label="删除线"><s>A</s></button>
        <button class="tool" aria-label="文本左对齐"><svg><use href="#t-left"/></svg></button>
        <button class="tool" aria-label="文本居中"><svg><use href="#t-center"/></svg></button>
        <button class="tool" aria-label="文本右对齐"><svg><use href="#t-right"/></svg></button>
        <button class="tool" aria-label="项目符号"><svg><use href="#t-list"/></svg></button>
        <button class="tool glyph" aria-label="字体颜色"><span class="font-color">A</span></button>
        <button class="tool" aria-label="线条颜色"><svg><use href="#t-pen"/></svg></button>
        <button class="tool" aria-label="填充颜色"><svg><use href="#t-fill"/></svg></button>
        <button class="tool" aria-label="样式刷"><svg><use href="#t-brush"/></svg></button>
      </div>
      <div class="toolbar">
        <span class="grip"></span>
        <label class="combo combo-global off"><select aria-label="全局配置" disabled><option>无全局配置</option></select><svg><use href="#chev"/></svg></label>
        <button class="tool" aria-label="选择全局配置"><svg><use href="#gconf"/></svg></button>
        <button class="tool" aria-label="刷新"><svg><use href="#refresh"/></svg></button>
      </div>
    </div>
  </div>

  <main class="workspace">
    <aside class="browser">
      <div class="browser-title"><button aria-label="关闭浏览器">x</button></div>
      <div class="browser-inner">
        <div class="view-bar">
          <button class="view-select">全模型视图 <span class="tri"></span></button>
          <div class="view-nav">
            <button aria-label="下移"><svg viewBox="0 0 12 14"><path d="M3.500 0h5v6H12l-6 7-6-7h3.500z"/></svg></button>
            <button aria-label="上移"><svg viewBox="0 0 12 14"><path d="M3.500 13h5V7H12L6 0 0 7h3.500z"/></svg></button>
          </div>
        </div>
        <div class="tree">
          <ul>
            <li>
              <div class="node"><button class="exp" aria-label="折叠"></button><svg><use href="#logored"/></svg><span>CountDown</span></div>
              <ul>
                <li>
                  <div class="node"><button class="exp" aria-label="折叠"></button><svg><use href="#folder"/></svg><span>包</span></div>
                  <ul>
                    <li><div class="node"><button class="exp plus" aria-label="展开"></button><svg><use href="#pkgred"/></svg><b>Default</b></div></li>
                  </ul>
                </li>
                <li>
                  <div class="node"><button class="exp" aria-label="折叠"></button><svg><use href="#folder"/></svg><span>对象模型图</span></div>
                  <ul>
                    <li><div class="node"><i class="leaf"></i><svg><use href="#omd"/></svg><span>Model1</span></div></li>
                  </ul>
                </li>
                <li>
                  <div class="node"><button class="exp" aria-label="折叠"></button><svg><use href="#folder"/></svg><span>组件</span></div>
                  <ul>
                    <li>
                      <div class="node"><button class="exp" aria-label="折叠"></button><svg><use href="#comp"/></svg><b>Test</b></div>
                      <ul>
                        <li>
                          <div class="node"><button class="exp" aria-label="折叠"></button><svg><use href="#folder"/></svg><span>配置</span></div>
                          <ul>
                            <li><div class="node"><button class="exp plus" aria-label="展开"></button><svg><use href="#gear"/></svg><b class="selected">Release</b></div></li>
                          </ul>
                        </li>
                      </ul>
                    </li>
                  </ul>
                </li>
              </ul>
            </li>
          </ul>
        </div>
      </div>
    </aside>

    <section class="editor">
      <div class="doc-tabs">
        <div class="doc-tab active">
          <svg class="tab-edge" viewBox="0 0 20 20" preserveAspectRatio="none"><path d="M0 20 16 2q2-1.500 4-1.500V20z" fill="#cbd9ee"/><path d="M0 20 16 2q2-1.500 4-1.500" fill="none" stroke="#8d9092"/></svg>
          <div class="tab-body"><svg class="tab-icon"><use href="#omd"/></svg><b>Model1 *</b><button aria-label="关闭标签"><svg viewBox="0 0 10 10"><path d="m1 1 8 8M9 1 1 9"/></svg></button></div>
        </div>
        <div class="doc-tab">
          <div class="tab-body"><svg class="tab-icon"><use href="#globe"/></svg><span>欢迎使用 Rhapsody</span></div>
        </div>
        <button class="tab-list" aria-label="标签列表"><span class="tri"></span></button>
      </div>
      <div class="canvas-area">
        <div class="canvas">
          <div class="class-box">
            <div class="class-name">CountDownSystem</div>
            <div class="class-attrs"></div>
            <div class="class-ops"><svg><use href="#ctor"/></svg><span>CountDownSystem()</span></div>
          </div>
          <svg class="cursor" viewBox="0 0 20 28"><path d="M9.500 1v17M1 9.500h18" stroke="#111" stroke-width="1.500"/><path d="m9.500 0 4 4h-8zM9.500 19l4-4h-8zM0 9.500l4-4v8zM19 9.500l-4-4v8z" fill="#111"/><path d="M10 10v14l3-3 3 6 2.500-1-2.500-6h4z" fill="#fff" stroke="#111"/></svg>
          <div class="tooltip">类 CountDownSystem 位于 Default</div>
        </div>
        <div class="vscroll">
          <svg class="arrow" viewBox="0 0 10 6"><path d="m.7 5.300 4.300-4.300 4.300 4.300"/></svg>
          <div class="vtrack"><div class="vthumb"></div></div>
          <svg class="arrow" viewBox="0 0 10 6"><path d="m.7.7 4.300 4.300L9.300.7"/></svg>
        </div>
        <div class="hscroll">
          <svg class="arrow side" viewBox="0 0 6 10"><path d="M5.300.7 1 5l4.300 4.300"/></svg>
          <div class="htrack"><div class="hthumb"></div></div>
          <svg class="arrow side" viewBox="0 0 6 10"><path d="m.7.7 4.300 4.300-4.300 4.300"/></svg>
        </div>
        <div class="corner"><svg viewBox="0 0 12 12"><path d="M8 0h3v3H8zM4 4h3v3H4zM8 4h3v3H8zM0 8h3v3H0zM4 8h3v3H4zM8 8h3v3H8z"/></svg></div>
      </div>
    </section>

    <aside class="toolbox">
      <div class="dock-bar">
        <span class="dock-lines"></span>
        <button class="mini" aria-label="菜单"><span class="tri"></span></button>
        <button class="mini" aria-label="关闭工具箱"><svg viewBox="0 0 10 10"><path d="m2 2 6 6M8 2 2 8"/></svg></button>
      </div>
      <div class="palette">
        <button class="item pressed"><svg><use href="#p-sel"/></svg>选择</button>
        <button class="item"><svg><use href="#p-stamp"/></svg>戳记模式</button>
        <button class="group first"><svg class="box" viewBox="0 0 10 10"><path d="M.5.5h9v9h-9zM3 5h4"/></svg>图工具</button>
        <button class="item"><svg><use href="#p-obj"/></svg>对象</button>
        <button class="item"><svg><use href="#p-class"/></svg>类</button>
        <button class="item"><svg><use href="#p-cclass"/></svg>组合类</button>
        <button class="item"><svg><use href="#pkg"/></svg>包</button>
        <button class="item"><svg><use href="#p-port"/></svg>端口</button>
        <button class="item"><svg><use href="#p-gen"/></svg>泛化关系</button>
        <button class="item"><svg><use href="#p-assoc"/></svg>关联</button>
        <button class="item"><svg><use href="#p-dassoc"/></svg>定向关联</button>
        <button class="item"><svg><use href="#p-agg"/></svg>聚集</button>
        <button class="item"><svg><use href="#p-compo"/></svg>组合</button>
        <button class="item"><svg><use href="#p-link"/></svg>链接</button>
        <button class="item"><svg><use href="#p-dep"/></svg>依赖关系</button>
        <button class="item"><svg><use href="#p-flow"/></svg>流</button>
        <button class="item"><svg><use href="#p-real"/></svg>实现</button>
        <button class="item raised"><svg><use href="#p-iface"/></svg>接口</button>
        <button class="item"><svg><use href="#p-actor"/></svg>参与者</button>
        <button class="group second"><svg class="box" viewBox="0 0 10 10"><path d="M.5.5h9v9h-9zM3 5h4M5 3v4"/></svg>常用</button>
        <button class="group"><svg class="box" viewBox="0 0 10 10"><path d="M.5.5h9v9h-9zM3 5h4M5 3v4"/></svg>任意形状</button>
      </div>
      <svg class="next-hint" viewBox="0 0 18 32"><path d="m2 2 14 14L2 30"/></svg>
    </aside>
  </main>

  <section class="output">
    <div class="output-dock">
      <button class="mini" aria-label="关闭输出"><svg viewBox="0 0 10 10"><path d="m2 2 6 6M8 2 2 8"/></svg></button>
      <button class="mini" aria-label="展开输出"><svg viewBox="0 0 10 10"><path d="m4 2 3 3-3 3z" fill="#888" stroke="none"/></svg></button>
      <span class="dock-lines vertical"></span>
    </div>
    <div class="output-main">
      <div class="log">
        <input class="progress" type="range" min="0" max="100" value="100" aria-label="进度">
      </div>
      <div class="out-tabs">
        <button class="nav" aria-label="第一个"><svg viewBox="0 0 12 12"><path d="M2 0h1v12H2zM10 0v12L4 6z"/></svg></button>
        <button class="nav" aria-label="上一个"><svg viewBox="0 0 12 12"><path d="M9 0v12L3 6z"/></svg></button>
        <button class="nav" aria-label="下一个"><svg viewBox="0 0 12 12"><path d="M4 0v12l6-6z"/></svg></button>
        <button class="nav" aria-label="最后一个"><svg viewBox="0 0 12 12"><path d="M9 0h1v12H9zM2 0v12l6-6z"/></svg></button>
        <svg class="slant" viewBox="0 0 8 21"><path d="M0 .5h1L7 20"/></svg>
        <button class="out-tab active">日志</button>
        <svg class="slant" viewBox="0 0 8 21"><path d="M0 20 5 .5h3M4 9l4 11"/></svg>
        <button class="out-tab">检查模型</button>
        <svg class="slant" viewBox="0 0 8 21"><path d="M0 .5h8M2 .5 8 20M0 20l3-10"/></svg>
        <button class="out-tab">构建</button>
        <svg class="slant" viewBox="0 0 8 21"><path d="M0 .5h8M2 .5 8 20M0 20l3-10"/></svg>
        <button class="out-tab">配置管理</button>
        <svg class="slant" viewBox="0 0 8 21"><path d="M0 .5h8M2 .5 8 20M0 20l3-10"/></svg>
        <button class="out-tab">动画</button>
        <svg class="slant" viewBox="0 0 8 21"><path d="M0 .5h8M6 .5 1 20"/></svg>
        <span class="out-rest"></span>
      </div>
    </div>
  </section>

  <footer class="statusbar">
    <span class="hint">如需帮助，请按 F1</span>
    <span>去掉标签</span>
    <span class="cell">周一, 12, 10月 2020</span>
    <span class="cell">7:30 &nbsp;PM</span>
    <span class="watermark">CSDN @cuit</span>
  </footer>
</body>
</html>
```
FILE: styles.css
```css
* {
  box-sizing: border-box;
}

body {
  margin: 0;
  height: 100vh;
  display: flex;
  flex-direction: column;
  overflow: hidden;
  background: #eef0ee;
  color: #111;
  font-family: "Noto Sans", "Noto Sans CJK SC", sans-serif;
  font-size: 15px;
}

button {
  margin: 0;
  padding: 0;
  border: none;
  background: none;
  color: inherit;
  font: inherit;
}

.sprite {
  position: absolute;
  width: 0;
  height: 0;
}

.tri {
  display: inline-block;
  border: 5px solid transparent;
  border-top-color: #111;
  border-bottom: none;
}

/* title and menu */
.titlebar {
  display: flex;
  align-items: center;
  height: 28px;
  flex: none;
  padding: 0 3px 0 2px;
  background: #fdfefd;
}

.titlebar h1 {
  margin: 0 0 0 5px;
  font-family: "Open Sans", "Noto Sans CJK SC", sans-serif;
  font-size: 16px;
  font-weight: normal;
  white-space: nowrap;
}

.app-logo {
  width: 20px;
  height: 20px;
}

.win-buttons {
  display: flex;
  margin-left: auto;
}

.win-buttons button {
  width: 58px;
  height: 28px;
}

.win-buttons svg {
  width: 14px;
  height: 14px;
  fill: none;
  stroke: #111;
  stroke-width: 1.2;
}

.menubar {
  display: flex;
  align-items: center;
  gap: 16px;
  height: 25px;
  flex: none;
  padding-left: 7px;
  background: #fdfefd;
  border-bottom: 1px solid #e6e8e6;
}

.doc-icon {
  width: 20px;
  height: 20px;
  margin-right: -9px;
}

.mdi-buttons {
  display: flex;
  gap: 2px;
  margin: 0 1px 0 auto;
}

.mdi-buttons button {
  width: 22px;
  height: 22px;
  border: 1px solid #e2e4e4;
}

.mdi-buttons svg {
  width: 10px;
  height: 10px;
  fill: none;
  stroke: #4c5d74;
  stroke-width: 1.5;
}

/* toolbars */
.toolbars {
  flex: none;
  background: #fdfefd;
}

.toolbar-row {
  display: flex;
  height: 31px;
}

.toolbar {
  display: flex;
  align-items: center;
  padding: 2px 6px 0 2px;
  background: linear-gradient(#f1f3f1, #d8dad8);
  border-right: 1px solid #9fa19f;
  border-bottom: 1px solid #a3a5a3;
}

.toolbar.spaced {
  margin-left: 9px;
  border-left: 1px solid #b9bbb9;
  padding-left: 1px;
}

.grip {
  width: 6px;
  height: 26px;
  border: solid #b4b6b4;
  border-width: 0 1px;
  background: linear-gradient(90deg, #fff 2px, transparent 2px 4px);
}

.sep {
  width: 6px;
  height: 20px;
  background: linear-gradient(#999b99, #999b99) center / 1px 100% no-repeat;
}

.layout-bar .sep {
  width: 8px;
}

.tool {
  width: 23px;
  height: 23px;
  display: flex;
  align-items: center;
  justify-content: center;
  color: #969896;
}

.tool svg {
  width: 16px;
  height: 16px;
  overflow: visible;
}

.tool.on {
  background: #b5d3f3;
  border: 1px solid #9cc3ec;
}

.glyph {
  font-family: "Liberation Serif", serif;
  font-size: 17px;
  font-weight: bold;
}

.glyph.small {
  font-size: 14px;
}

.glyph sup {
  font-size: 10px;
  align-self: flex-start;
  line-height: 10px;
}

.font-color {
  width: 14px;
  border-bottom: 3px solid #969896;
  line-height: 13px;
}

.combo {
  display: flex;
  align-items: center;
  height: 24px;
  padding: 0 6px 0 2px;
  background: #fff;
  border: 1px solid #7d7f7d;
}

.combo select {
  appearance: none;
  flex: 1;
  min-width: 0;
  padding: 0;
  border: none;
  background: none;
  color: inherit;
  font-family: "Liberation Mono", "Noto Sans CJK SC", monospace;
  font-size: 14px;
  opacity: 1;
}

.combo svg {
  width: 10px;
  height: 6px;
  color: #444;
}

.combo.flat {
  background: #e0e2e0;
  border-color: #adafad;
}

.combo.dim {
  color: #6d6f6d;
  border-color: #c9cbc9;
  background: #f3f4f3;
}

.combo.off {
  color: #6d6f6d;
  background: #c9cbc9;
  border-color: #bdbfbd;
}

.combo.dim svg,
.combo.off svg {
  color: #9a9c9a;
}

.combo.dim select,
.combo.off select {
  font-size: 15px;
}

.combo-zoom { width: 60px; margin-right: 2px; }
.combo-comp { width: 200px; }
.combo-conf { width: 160px; }
.combo-nav { width: 300px; }
.combo-font { width: 98px; margin-right: 2px; }
.combo-size { width: 49px; }
.combo-global { width: 299px; }

/* workspace */
.workspace {
  flex: 1;
  min-height: 0;
  display: grid;
  grid-template-columns: 351px 1fr 419px;
  border-top: 1px solid #a3a5a3;
}

.browser {
  display: flex;
  flex-direction: column;
  margin: 0 0 3px 2px;
  padding: 0 8px 8px 7px;
  background: #b8cfe8;
  border: 1px solid #3c5876;
  border-top-color: #6f89a8;
  box-shadow: inset -1px -1px #7fd0f2;
}

.browser-title {
  display: flex;
  justify-content: flex-end;
  height: 35px;
  margin: 0 -7px;
  padding: 9px 9px 0;
  background: linear-gradient(#94afd2, #b4cbe6);
}

.browser-title button {
  width: 22px;
  height: 22px;
  background: #d0584f;
  border: 1px solid #b5655f;
  color: #fff;
  font-size: 13px;
  font-weight: bold;
  line-height: 16px;
}

.browser-inner {
  flex: 1;
  display: flex;
  flex-direction: column;
  background: #fdfefd;
}

.view-bar {
  display: flex;
  align-items: flex-start;
  height: 35px;
}

.view-select {
  display: flex;
  align-items: center;
  justify-content: space-between;
  width: 131px;
  height: 33px;
  padding: 10px 10px 0 14px;
  background: #eef0ee;
  border: solid #a9aba9;
  border-width: 0 1px 1px 0;
}

.view-nav {
  display: flex;
  justify-content: center;
  gap: 11px;
  width: 61px;
  height: 29px;
  background: #eef0ee;
  border: solid #a9aba9;
  border-width: 0 1px 1px 0;
}

.view-nav svg {
  width: 12px;
  height: 14px;
  fill: #969896;
}

.tree {
  flex: 1;
  padding-left: 5px;
  border: solid #6f716f;
  border-width: 1px 0 0 2px;
}

.tree ul {
  margin: 0;
  padding: 0;
  list-style: none;
}

.tree ul ul {
  padding-left: 19px;
}

.tree li {
  position: relative;
}

.tree ul ul > li::before {
  content: "";
  position: absolute;
  left: 5px;
  top: -2px;
  bottom: 0;
  border-left: 1px dotted #777;
}

.tree li:last-child::before {
  bottom: auto;
  height: 10px;
}

.node {
  display: flex;
  align-items: center;
  height: 16px;
  line-height: 16px;
  font-size: 15px;
  white-space: nowrap;
}

.node svg {
  width: 16px;
  height: 16px;
  margin-right: 5px;
  flex: none;
}

.exp {
  position: relative;
  width: 11px;
  height: 11px;
  margin-right: 5px;
  border: 1px solid #8b8d8b;
  background: linear-gradient(#3b5aa8, #3b5aa8) center / 7px 1px no-repeat, #f7f8f7;
}

.exp.plus {
  background: linear-gradient(#3b5aa8, #3b5aa8) center / 7px 1px no-repeat, linear-gradient(#3b5aa8, #3b5aa8) center / 1px 7px no-repeat, #f7f8f7;
}

.exp::after {
  content: "";
  position: absolute;
  left: 10px;
  top: 4px;
  width: 4px;
  border-top: 1px dotted #777;
}

.leaf {
  width: 10px;
  margin: 0 0 0 6px;
  border-top: 1px dotted #777;
}

.selected {
  padding: 0 2px;
  margin-left: -2px;
  background: #0b72d4;
  color: #fff;
}

/* editor */
.editor {
  display: flex;
  flex-direction: column;
  min-width: 0;
  padding: 3px 6px 5px 6px;
}

.doc-tabs {
  display: flex;
  height: 21px;
  padding-left: 9px;
  overflow: hidden;
}

.doc-tab {
  display: flex;
  height: 21px;
}

.tab-edge {
  width: 20px;
  height: 21px;
}

.tab-body {
  display: flex;
  align-items: center;
  padding: 4px 12px 0 5px;
  border: 1px solid #9a9c9a;
  border-bottom: none;
  border-radius: 3px 3px 0 0;
  font-size: 14px;
  white-space: nowrap;
}

.active .tab-body {
  padding: 4px 9px 0 2px;
  border-left: none;
  border-radius: 0 4px 0 0;
  background: linear-gradient(#cfdcf0, #b9cae6);
}

.tab-icon {
  width: 16px;
  height: 16px;
  margin: -4px 16px 0 0;
}

.tab-body button {
  margin-left: 14px;
  line-height: 8px;
}

.tab-body button svg {
  width: 9px;
  height: 9px;
  fill: none;
  stroke: #111;
  stroke-width: 1.6;
}

.tab-list {
  align-self: flex-end;
  width: 15px;
  height: 15px;
  margin: 0 1px 0 auto;
  border: solid #8b8d8b;
  border-width: 0 1px 1px 0;
  line-height: 8px;
}

.canvas-area {
  flex: 1;
  display: grid;
  grid-template: 1fr 21px / 1fr 20px;
  border: solid #6f716f;
  border-width: 2px 0 0 2px;
  border-right: 1px solid #dcdedc;
  min-height: 0;
}

.canvas {
  position: relative;
  background: linear-gradient(#fbfcfa, #e9ebe9);
}

.class-box {
  position: absolute;
  left: 277px;
  top: 111px;
  width: 487px;
  border: 6px solid #65a0dc;
  border-radius: 5px;
  background: #65a0dc;
}

.class-name {
  height: 28px;
  background: linear-gradient(#dae9f8, #b9d2ec);
  font: bold 18px/26px "Liberation Serif", serif;
  text-align: center;
}

.class-attrs {
  height: 61px;
  margin: 6px 0;
  background: #fdfefd;
}

.class-ops {
  display: flex;
  gap: 4px;
  height: 59px;
  padding: 7px 13px;
  background: linear-gradient(#fdfefd 65%, #e9ebe9);
  font: 23px/28px "Liberation Serif", serif;
}

.class-ops svg {
  width: 20px;
  height: 20px;
}

.cursor {
  position: absolute;
  left: 457px;
  top: 190px;
  width: 20px;
  height: 28px;
}

.tooltip {
  position: absolute;
  left: 466px;
  top: 219px;
  padding: 0 8px 0 7px;
  background: #fdfefd;
  border: 1px solid #777;
  box-shadow: 3px 3px 1px rgba(0, 0, 0, 0.45);
  color: #585a58;
  font-size: 15px;
  line-height: 24px;
  white-space: nowrap;
}

.vscroll {
  display: flex;
  flex-direction: column;
  align-items: center;
  border-left: 1px solid #fdfefd;
  padding: 7px 0 8px;
}

.vtrack {
  flex: 1;
  width: 19px;
  padding-top: 32px;
}

.vthumb {
  height: 44%;
  background: #c9cbc9;
}

.hscroll {
  display: flex;
  align-items: center;
  padding: 0 8px 0 7px;
  border-top: 1px solid #fdfefd;
}

.htrack {
  flex: 1;
  padding-left: 75px;
}

.hthumb {
  width: 71%;
  height: 19px;
  background: #c9cbc9;
}

.arrow {
  width: 10px;
  height: 6px;
  fill: none;
  stroke: #444;
  stroke-width: 1.6;
}

.arrow.side {
  width: 6px;
  height: 10px;
}

.corner {
  display: flex;
  align-items: flex-end;
  justify-content: center;
  padding-bottom: 2px;
}

.corner svg {
  width: 12px;
  height: 12px;
  fill: #bcbebc;
}

/* toolbox */
.toolbox {
  position: relative;
  margin-right: 2px;
  padding: 3px 2px 0 1px;
  border: solid #6f716f;
  border-width: 0 1px 0 2px;
  border-right-color: #a9aba9;
  margin-bottom: 5px;
}

.dock-bar {
  display: flex;
  align-items: center;
  gap: 3px;
  padding: 0 3px 0 4px;
}

.dock-lines {
  flex: 1;
  height: 5px;
  border: solid #a9aba9;
  border-width: 1px 0;
}

.mini {
  display: flex;
  align-items: center;
  justify-content: center;
  width: 11px;
  height: 11px;
  border: solid #8b8d8b;
  border-width: 0 1px 1px 0;
}

.mini svg {
  width: 10px;
  height: 10px;
  stroke: #111;
  stroke-width: 1.8;
}

.mini .tri {
  border-width: 3px;
  border-top-color: #8b8d8b;
}

.palette {
  display: flex;
  flex-direction: column;
  margin-top: 5px;
}

.item {
  display: flex;
  align-items: center;
  gap: 14px;
  height: 28px;
  padding-left: 4px;
  border: 1px solid transparent;
  font-size: 14px;
  text-align: left;
}

.item svg {
  width: 16px;
  height: 16px;
}

.item.pressed {
  background: #f7f8f7;
  border-color: #a9aba9 transparent #fdfefd #a9aba9;
}

.item.raised {
  border-color: #fdfefd #9a9c9a #9a9c9a transparent;
}

.group {
  display: flex;
  align-items: center;
  gap: 6px;
  height: 23px;
  margin-top: 1px;
  padding-left: 6px;
  background: linear-gradient(#a5a7a5, #7d7f7d);
  color: #fff;
  font-size: 15px;
  font-weight: bold;
}

.group.first {
  margin: 5px 0 5px;
}

.group.second {
  margin-top: 4px;
}

.box {
  width: 10px;
  height: 10px;
  fill: #fdfefd;
  stroke: #111;
}

.next-hint {
  position: absolute;
  right: 6px;
  top: 378px;
  width: 18px;
  height: 32px;
  fill: none;
  stroke: #e2e5e2;
  stroke-width: 3;
}

/* output window */
.output {
  flex: 0 0 22vh;
  display: flex;
  padding: 3px 4px 5px 0;
  border-top: 2px solid #8b8d8b;
  border-bottom: 1px solid #a9aba9;
}

.output-dock {
  display: flex;
  flex-direction: column;
  align-items: center;
  gap: 1px;
  width: 19px;
  padding: 2px 0 0 2px;
}

.dock-lines.vertical {
  width: 5px;
  border-width: 0 1px;
}

.output-main {
  flex: 1;
  display: flex;
  flex-direction: column;
  border: solid #6f716f;
  border-width: 2px 0 0 2px;
  border-right: 1px solid #dcdedc;
}

.log {
  flex: 1;
  display: flex;
  align-items: center;
  padding: 31px 156px 0 9px;
  background: linear-gradient(#fdfefd, #eff1ef);
}

.progress {
  appearance: none;
  flex: 1;
  height: 22px;
  margin: 0;
  background: linear-gradient(#e5edf2, #e5edf2) center / 100% 5px no-repeat;
}

.progress::-webkit-slider-thumb {
  appearance: none;
  width: 24px;
  height: 24px;
  border: 2px solid #e2eaef;
  border-radius: 50%;
  background: #f5f7f5;
}

.out-tabs {
  display: flex;
  height: 21px;
  background: #e4e6e4;
}

.nav {
  display: flex;
  align-items: center;
  justify-content: center;
  width: 22px;
  padding-right: 2px;
  border: 1px solid #8b8d8b;
  border-left-color: #fdfefd;
}

.nav svg {
  width: 12px;
  height: 12px;
  fill: #969896;
}

.slant {
  width: 8px;
  height: 21px;
  fill: none;
  stroke: #111;
}

.out-tab {
  padding: 0 5px;
  border-top: 1px solid #333;
  font-size: 14px;
  line-height: 20px;
}

.out-tab.active {
  padding: 0 4px 0 0;
  border-color: transparent;
  font-size: 15px;
}

.out-rest {
  flex: 1;
  border-top: 1px solid #333;
}

/* status bar */
.statusbar {
  position: relative;
  display: flex;
  align-items: center;
  gap: 6px;
  height: 24px;
  flex: none;
  padding: 4px 8px 0 2px;
  background: #e4e6e4;
  border-bottom: 2px solid #333;
  white-space: nowrap;
}

.hint {
  flex: 1;
}

.cell {
  padding: 0 2px 0 3px;
  border-left: 1px solid #c9cbc9;
}

.watermark {
  position: absolute;
  right: 14px;
  top: 2px;
  color: #9c9e9c;
  font-size: 10px;
}
```
